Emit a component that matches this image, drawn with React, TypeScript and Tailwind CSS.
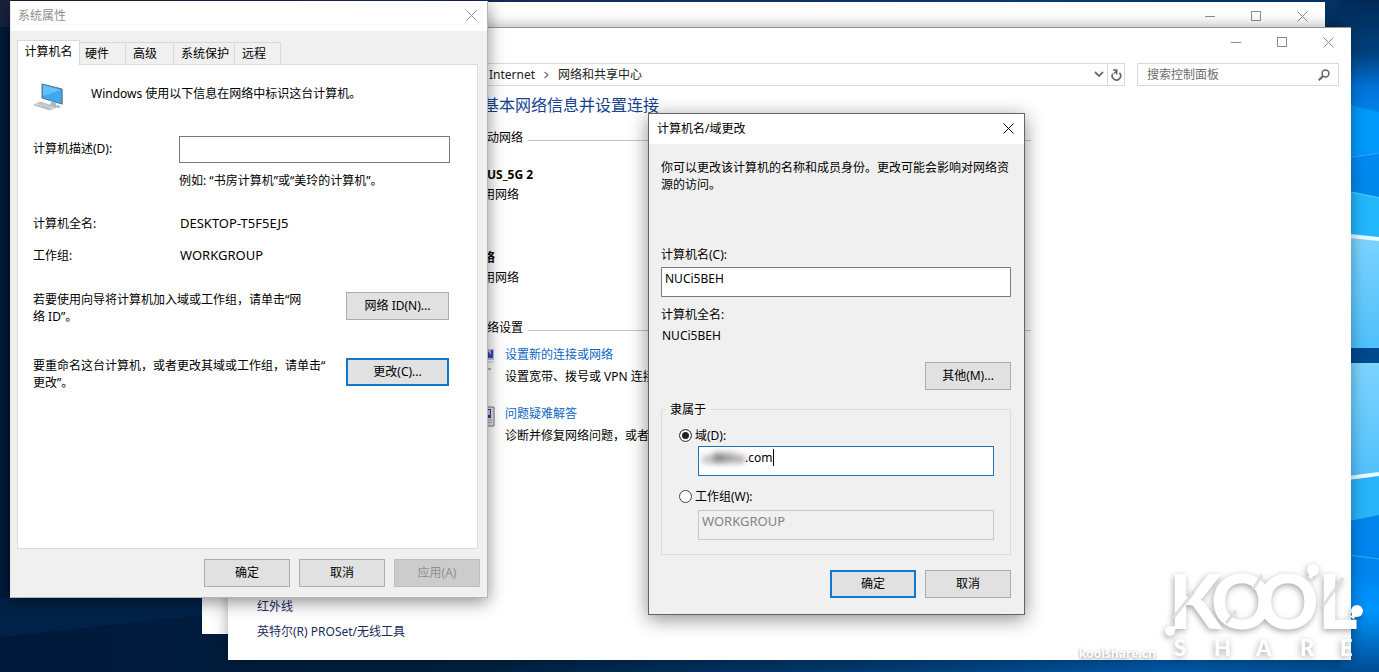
import React, { useState } from 'react';
import clsx from 'clsx';

const tabs = [
  { name: '硬件', width: 'w-[46px] pl-[5px]' },
  { name: '高级', width: 'w-12 pl-[7px]' },
  { name: '系统保护', width: 'w-[61px] pl-[7px]' },
  { name: '远程', width: 'w-[46px] pl-[7px]' },
];

type ButtonProps = React.ButtonHTMLAttributes<HTMLButtonElement> & { primary?: boolean };

function DialogButton({ primary, className, ...props }: ButtonProps) {
  return (
    <button
      type="button"
      className={clsx(
        'h-7 shrink-0 bg-[#e1e1e1] pb-0.5 text-center disabled:border-[#bfbfbf] disabled:bg-[#cccccc] disabled:text-[#8f8f8f]',
        primary ? 'border-2 border-[#0f77d0]' : 'border border-[#adadad]',
        className
      )}
      {...props}
    />
  );
}

function CloseIcon() {
  return (
    <svg width="11" height="11" viewBox="0 0 11 11" stroke="currentColor" fill="none">
      <path d="M.5.5l10 10M10.5.5l-10 10" />
    </svg>
  );
}

function WindowControls() {
  return (
    <div className="flex justify-end text-[#8c8c8c]">
      <button type="button" aria-label="最小化" className="flex h-7 w-[46px] items-center justify-center">
        <svg width="11" height="11" viewBox="0 0 11 11" stroke="currentColor"><path d="M0 5.5h10" /></svg>
      </button>
      <button type="button" aria-label="最大化" className="flex h-7 w-[46px] items-center justify-center">
        <svg width="11" height="11" viewBox="0 0 11 11" stroke="currentColor" fill="none"><rect x=".5" y=".5" width="9" height="9" /></svg>
      </button>
      <button type="button" aria-label="关闭" className="flex h-7 w-[46px] items-center justify-center">
        <CloseIcon />
      </button>
    </div>
  );
}

function Wallpaper() {
  return (
    <svg className="absolute inset-0 h-full w-full" viewBox="0 0 1379 672" preserveAspectRatio="none" aria-hidden="true">
      <defs>
        <linearGradient id="base" x1="0" x2="1" y1="0" y2="0">
          <stop offset="0" stopColor="#00193a" />
          <stop offset=".35" stopColor="#00203f" />
          <stop offset=".65" stopColor="#003d75" />
          <stop offset=".85" stopColor="#0058a8" />
          <stop offset="1" stopColor="#004c8e" />
        </linearGradient>
        <linearGradient id="glow" x1="0" x2="0" y1="0" y2="1">
          <stop offset="0" stopColor="#002a57" />
          <stop offset=".08" stopColor="#00427f" />
          <stop offset=".13" stopColor="#0074da" />
          <stop offset=".2" stopColor="#008cf5" />
          <stop offset=".27" stopColor="#0088ec" />
          <stop offset=".85" stopColor="#0085ee" />
          <stop offset=".91" stopColor="#0096ff" />
          <stop offset="1" stopColor="#004c92" />
        </linearGradient>
        <linearGradient id="pane" x1="0" x2="0" y1="0" y2="1">
          <stop offset="0" stopColor="#7cd4ff" />
          <stop offset="1" stopColor="#4fc0fb" />
        </linearGradient>
        <linearGradient id="topbar" x1="0" x2="1" y1="0" y2="0">
          <stop offset="0" stopColor="#17233d" />
          <stop offset=".75" stopColor="#0b3870" />
          <stop offset="1" stopColor="#002f5f" />
        </linearGradient>
      </defs>
      <rect width="1379" height="672" fill="url(#base)" />
      <path d="M0 598h228v14L0 637z" fill="#002750" opacity=".7" />
      <rect width="1379" height="27" fill="url(#topbar)" />
      <rect x="1340" width="39" height="672" fill="url(#glow)" />
      <path d="M1340 103l39 9v40l-39 6z" fill="#0099fb" />
      <path d="M1340 159l39-6" stroke="#28b2ff" />
      <path d="M1340 189l39 8v41h-39z" fill="#22b6fb" />
      <path d="M1340 190l39 8" stroke="#55c8fc" />
      <path d="M1340 233l39 6v109h-39z" fill="url(#pane)" />
      <path d="M1340 235l39 4" stroke="#e9f9ff" strokeWidth="4" />
      <rect x="1340" y="348" width="39" height="15" fill="#00498c" />
      <path d="M1340 363h39v114l-39 5z" fill="url(#pane)" />
      <path d="M1340 479l39-5v41l-39 8z" fill="#27b5f8" />
      <path d="M1340 479l39-5" stroke="#e9f9ff" strokeWidth="4" />
      <path d="M1340 554l39 5" stroke="#2fb2f5" />
    </svg>
  );
}

function ComputerIcon() {
  return (
    <svg width="31" height="30" viewBox="0 0 31 30" aria-hidden="true">
      <path d="M9 1l20 5v15L9 15z" fill="#3da9f5" stroke="#536d80" />
      <path d="M10 2l18 5L10 13z" fill="#62c0ff" />
      <path d="M29 6l1 .5V21l-1 1z" fill="#8c9aa5" />
      <path d="M18 18l5 2v2l5 1-2 2-9-2z" fill="#aeb9c1" />
      <path d="M1 22l6-3 16 5-6 3z" fill="#d9dde1" stroke="#9ba6af" strokeWidth=".7" />
      <path d="M4 22l13 4M6 20.500l13 4M5 23l4-3M9 24.500l4-3M13 25.500l4-3" stroke="#a5afb8" strokeWidth=".7" />
    </svg>
  );
}

function NetworkWindow() {
  return (
    <section className="absolute top-[27px] right-7 bottom-3 left-[228px] flex flex-col border-t border-t-[#969696] bg-white shadow-[0_0_14px_rgba(0,0,0,0.35)]">
      <WindowControls />
      <div className="mt-[7px] flex gap-3 px-3">
        <div className="flex h-[23px] min-w-0 flex-1 items-center border border-[#d9d9d9] pl-[248px] text-[#222]">
          <span>Internet</span>
          <svg className="mx-[9px] shrink-0" width="5" height="8" viewBox="0 0 5 8" fill="none" stroke="#777"><path d="M.5 1L4 4 .5 7" strokeWidth="1.300" /></svg>
          <span className="flex-1">网络和共享中心</span>
          <button type="button" aria-label="以前的位置" className="flex w-4 justify-center">
            <svg width="10" height="7" viewBox="0 0 10 7" fill="none" stroke="#707070" strokeWidth="1.800"><path d="M1 1l4 4 4-4" /></svg>
          </button>
          <button type="button" aria-label="刷新" className="flex h-full w-[17px] items-center justify-center border-l border-[#d9d9d9]">
            <svg width="11" height="12" viewBox="0 0 11 12" fill="none" stroke="#666" strokeWidth="1.700">
              <path d="M1.800 4.600a4.200 4.200 0 1 0 6.600-.8" />
              <path d="M2 1h3.800v4.500M5.800 1.500L3 4.500" strokeWidth="1.400" />
            </svg>
          </button>
        </div>
        <label className="flex h-[23px] w-[202px] items-center border border-[#d9d9d9] pr-2 pl-[9px]">
          <input type="text" aria-label="搜索控制面板" placeholder="搜索控制面板" className="min-w-0 flex-1 outline-none placeholder:text-[#6d6d6d]" />
          <svg width="12" height="12" viewBox="0 0 12 12" fill="none" stroke="#666"><circle cx="7.500" cy="4.500" r="3.400" strokeWidth="1.500" /><path d="M5 7L.8 11.200" strokeWidth="2" /></svg>
        </label>
      </div>

      <div className="flex flex-1">
        <nav className="flex w-[255px] flex-col justify-end gap-2 pb-5 pl-[29px] text-[#1c2a5e]">
          <a href="#infrared">红外线</a>
          <a href="#proset">英特尔(R) PROSet/无线工具</a>
        </nav>
        <main className="max-w-[548px] flex-1 pt-[7px]">
          <h1 className="text-base leading-6 text-[#15418f]">基本网络信息并设置连接</h1>
          <div className="mt-3 flex items-center gap-[5px] pl-1">
            <h2>动网络</h2>
            <hr className="mt-1.5 flex-1 border-[#c4c4c4]" />
          </div>
          <p className="mt-5 pl-1 font-bold">US_5G 2</p>
          <p className="mt-[3px]">用网络</p>
          <p className="mt-[46px] font-bold">络</p>
          <p className="mt-[3px]">用网络</p>
          <div className="mt-[33px] flex items-center gap-[5px] pl-1">
            <h2>络设置</h2>
            <hr className="mt-1.5 flex-1 border-[#c4c4c4]" />
          </div>
          <div className="mt-2.5 flex gap-2.5">
            <svg width="12" height="27" viewBox="0 0 12 27" aria-hidden="true">
              <path d="M0 3h11v11H0z" fill="#b9c0e6" />
              <path d="M4 4h6v8H4z" fill="#3f48a8" />
              <path d="M4 4l4 5V4z" fill="#aab3ee" />
              <path d="M0 15h11v2H0z" fill="#e1e1e8" />
              <path d="M0 22h8v2H0z" fill="#b6b6ba" />
            </svg>
            <div>
              <a href="#new-connection" className="block text-[#0b66c3]">设置新的连接或网络</a>
              <p className="mt-[5px]">设置宽带、拨号或 VPN 连接</p>
            </div>
          </div>
          <div className="mt-5 flex gap-2.5">
            <svg width="12" height="25" viewBox="0 0 12 25" aria-hidden="true">
              <path d="M0 2h11v19H0z" fill="#e4e4e8" stroke="#77777d" />
              <path d="M3 4h5v9H3z" fill="#33418d" />
              <path d="M5 5h2v5H5z" fill="#c5cff7" />
              <path d="M3 15h6M3 17.500h6" stroke="#a2a2a8" />
            </svg>
            <div>
              <a href="#troubleshoot" className="block text-[#0b66c3]">问题疑难解答</a>
              <p className="mt-[5px]">诊断并修复网络问题，或者</p>
            </div>
          </div>
        </main>
      </div>
    </section>
  );
}

function SystemProperties() {
  return (
    <section className="absolute top-px left-2.5 w-[478px] border border-[#b5b5b5] border-t-white border-l-[#e8e8e8] bg-[#f0f0f0] shadow-[0_4px_16px_rgba(0,0,0,0.45)]">
      <header className="flex h-[29px] items-center justify-between bg-white pr-2.5 pb-0.5 pl-[7px] text-[#8f8f8f]">
        <span>系统属性</span>
        <button type="button" aria-label="关闭"><CloseIcon /></button>
      </header>
      <div className="px-1.5 pt-[9px]">
        <div role="tablist" className="flex items-end">
          <button type="button" role="tab" aria-selected="true" className="relative -mb-px h-[25px] w-[63px] border border-b-0 border-[#d9d9d9] bg-white pb-1">计算机名</button>
          {tabs.map((tab) => (
            <button key={tab.name} type="button" role="tab" aria-selected="false" className={clsx('h-[22px] border-t border-r border-[#d9d9d9] text-left', tab.width)}>
              {tab.name}
            </button>
          ))}
        </div>
        <div role="tabpanel" className="mr-[3px] border border-[#dcdcdc] bg-white pt-[18px] pr-7 pb-[157px] pl-[15px]">
          <div className="flex items-start gap-[27px]">
            <ComputerIcon />
            <p className="pt-0.5">Windows 使用以下信息在网络中标识这台计算机。</p>
          </div>
          <div className="mt-[23px] flex items-center">
            <label htmlFor="description" className="w-[146px] pb-0.5">计算机描述(D):</label>
            <input id="description" type="text" className="-mr-px h-[27px] min-w-0 flex-1 border border-[#7a7a7a] bg-white px-1" />
          </div>
          <p className="mt-[9px] pl-[146px]">例如: “书房计算机”或“美玲的计算机”。</p>
          <dl>
            <div className="mt-[26px] flex">
              <dt className="w-[147px]">计算机全名:</dt>
              <dd className="text-[13px]">DESKTOP-T5F5EJ5</dd>
            </div>
            <div className="mt-[15px] flex">
              <dt className="w-[147px]">工作组:</dt>
              <dd className="text-[13px]">WORKGROUP</dd>
            </div>
          </dl>
          <div className="mt-[27px] flex items-start justify-between">
            <p className="whitespace-nowrap">若要使用向导将计算机加入域或工作组，请单击“网<br />络 ID”。</p>
            <DialogButton className="mt-px w-[103px]">网络 ID(N)...</DialogButton>
          </div>
          <div className="mt-8 flex items-start justify-between">
            <p className="whitespace-nowrap">要重命名这台计算机，或者更改其域或工作组，请单击“<br />更改”。</p>
            <DialogButton primary className="mt-px w-[103px]">更改(C)...</DialogButton>
          </div>
        </div>
        <div className="flex justify-end gap-[9px] py-2.5 pr-px">
          <DialogButton className="w-[86px]">确定</DialogButton>
          <DialogButton className="w-[86px]">取消</DialogButton>
          <DialogButton className="w-[86px]" disabled>应用(A)</DialogButton>
        </div>
      </div>
    </section>
  );
}

function RenameDialog() {
  const [name, setName] = useState('NUCi5BEH');
  const [domain, setDomain] = useState('.com');
  const [member, setMember] = useState('domain');
  const radio =
    'h-[13px] w-[13px] appearance-none rounded-full border border-[#444] bg-white checked:bg-[#222] checked:shadow-[inset_0_0_0_2px_#fff]';

  return (
    <section className="absolute top-[113px] left-[648px] w-[377px] border border-[#646464] bg-[#f0f0f0] shadow-[0_4px_18px_rgba(0,0,0,0.45)]">
      <header className="flex h-[30px] items-center justify-between bg-white pr-2.5 pb-0.5 pl-2">
        <span>计算机名/域更改</span>
        <button type="button" aria-label="关闭"><CloseIcon /></button>
      </header>
      <form className="flex flex-col pt-[15px] pr-[13px] pb-4 pl-3">
        <p className="whitespace-nowrap">你可以更改该计算机的名称和成员身份。更改可能会影响对网络资<br />源的访问。</p>
        <label htmlFor="computer-name" className="mt-[53px]">计算机名(C):</label>
        <input
          id="computer-name"
          type="text"
          value={name}
          onChange={(e) => setName(e.target.value)}
          className="mt-1 h-[30px] border border-[#7a7a7a] bg-white pb-2 pl-[3px] outline-none"
        />
        <p className="mt-[9px]">计算机全名:</p>
        <p className="mt-1 pl-px">{name}</p>
        <DialogButton className="mt-[18px] w-[86px] self-end">其他(M)...</DialogButton>

        <fieldset className="mt-[11px] border border-[#dcdcdc] pr-4 pb-3.5 pl-[17px]">
          <legend className="-ml-[13px] px-1">隶属于</legend>
          <label className="mt-[9px] flex items-center gap-[3px]">
            <input type="radio" name="member" className={radio} checked={member === 'domain'} onChange={() => setMember('domain')} />
            域(D):
          </label>
          <div className="relative mt-0.5 ml-[19px]">
            <input
              type="text"
              aria-label="域"
              value={domain}
              onChange={(e) => setDomain(e.target.value)}
              className="block h-[30px] w-full border border-[#1a73b8] bg-white pb-2 pl-[46px] outline-none"
            />
            {/* masked part of the domain */}
            <div className="absolute top-[7px] left-1 flex h-2.5 w-[43px] blur-[3px]">
              <span className="mt-[3px] flex-1 bg-[#b9b9be]" />
              <span className="flex-1 bg-[#85858a]" />
              <span className="flex-1 bg-[#a0a0a4]" />
              <span className="mt-0.5 flex-1 bg-[#b0a8a8]" />
            </div>
            <span className="absolute top-[3px] left-[75px] h-[17px] w-px bg-black" />
          </div>
          <label className="mt-3 flex items-center gap-[3px]">
            <input type="radio" name="member" className={radio} checked={member === 'workgroup'} onChange={() => setMember('workgroup')} />
            工作组(W):
          </label>
          <div className="mt-[5px] ml-[19px]">
            <input type="text" aria-label="工作组" value="WORKGROUP" disabled className="block h-[30px] w-full border border-[#c8c8c8] pb-2 pl-[3px] text-[13px] text-[#838383]" />
          </div>
        </fieldset>

        <div className="mt-[15px] flex justify-end gap-[9px]">
          <DialogButton primary className="w-[86px]">确定</DialogButton>
          <DialogButton className="w-[86px]">取消</DialogButton>
        </div>
      </form>
    </section>
  );
}

function Watermark() {
  return (
    <div className="pointer-events-none absolute right-[15px] bottom-2 flex items-end gap-1 text-white">
      <span className="font-['Open_Sans'] text-[12px] leading-5 font-bold [text-shadow:0_1px_3px_rgba(0,0,0,0.45)]">koolshare.cn</span>
      <svg width="204" height="106" viewBox="0 0 204 106" className="overflow-visible font-['Lato'] drop-shadow-[-1px_2px_3px_rgba(0,0,0,0.35)]" fill="#fff">
        <text x="9 51 97 158" y="71" fontSize="76" fontWeight="900">KOOL</text>
        <path d="M13 60L34 34M66 65l10-12M93 31l9-14M163 48l20-28" stroke="#dedede" strokeWidth="3" />
        <path d="M10 74l5-5M150 20l3-6M192 60l5-6" stroke="#fff" strokeWidth="4" />
        <circle cx="10" cy="73" r="5" />
        <circle cx="153" cy="12" r="6" />
        <circle cx="197" cy="53" r="6" />
        <text x="14 54 96 140 180" y="98" fontSize="22" fontWeight="900">SHARE</text>
      </svg>
    </div>
  );
}

export default function App() {
  return (
    <div className="relative min-h-screen overflow-hidden bg-[#001d3f] font-['Noto_Sans','Noto_Sans_CJK_SC',sans-serif] text-[12px] leading-[17px] text-black">
      <Wallpaper />
      <section className="absolute top-0.5 right-[54px] bottom-[38px] left-[202px] bg-white">
        <WindowControls />
      </section>
      <NetworkWindow />
      <SystemProperties />
      <RenameDialog />
      <Watermark />
    </div>
  );
}
